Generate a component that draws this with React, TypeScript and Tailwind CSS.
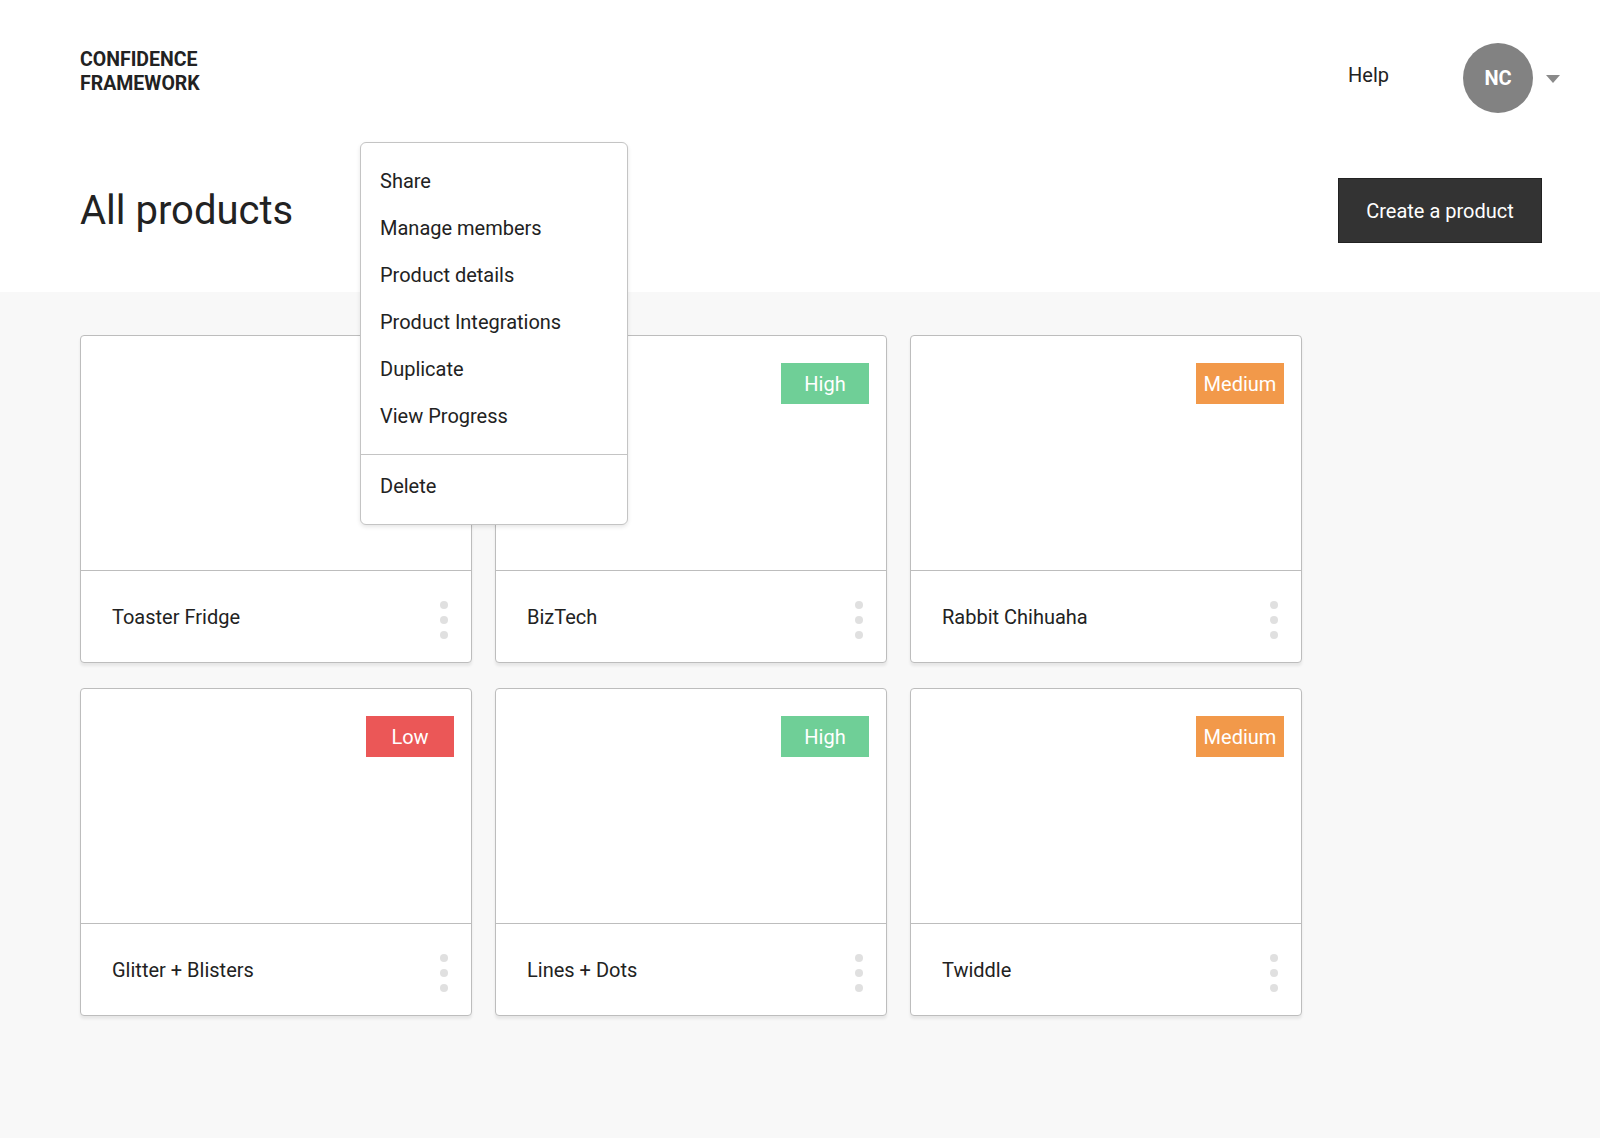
import React from 'react'

interface Product {
  name: string
  level?: 'High' | 'Medium' | 'Low'
}

const products: Product[] = [
  { name: 'Toaster Fridge' },
  { name: 'BizTech', level: 'High' },
  { name: 'Rabbit Chihuaha', level: 'Medium' },
  { name: 'Glitter + Blisters', level: 'Low' },
  { name: 'Lines + Dots', level: 'High' },
  { name: 'Twiddle', level: 'Medium' },
]

const badgeColor: Record<string, string> = {
  High: 'bg-[#6fcf97]',
  Medium: 'bg-[#f2994a]',
  Low: 'bg-[#eb5757]',
}

const menuItems = ['Share', 'Manage members', 'Product details', 'Product Integrations', 'Duplicate', 'View Progress']

function ProductCard({ product }: { product: Product }) {
  return (
    <div className="bg-white border border-[#bdbdbd] rounded-[4px] shadow-[0_3px_3px_rgba(0,0,0,0.07)]">
      <div className="h-[234px] flex justify-end items-start pt-[27px] pr-[17px]">
        {product.level && (
          <span className={`w-[88px] h-[41px] flex items-center justify-center text-white text-[20px] ${badgeColor[product.level]}`}>
            {product.level}
          </span>
        )}
      </div>
      <div className="h-[92px] border-t border-[#bdbdbd] flex items-center justify-between pl-[31px] pr-[23px]">
        <span className="text-[20px] text-[#222]">{product.name}</span>
        <div className="flex flex-col gap-[7px] pt-[6px]">
          <span className="w-[8px] h-[8px] rounded-full bg-[#e0e0e0]" />
          <span className="w-[8px] h-[8px] rounded-full bg-[#e0e0e0]" />
          <span className="w-[8px] h-[8px] rounded-full bg-[#e0e0e0]" />
        </div>
      </div>
    </div>
  )
}

export default function App() {
  return (
    <div className="relative min-h-[1138px] bg-[#f8f8f8] font-['Roboto',sans-serif] text-[#222]">
      <header className="bg-white h-[292px]">
        <div className="flex justify-between items-start pt-[43px] pl-[80px] pr-[40px]">
          <div className="mt-[5px] text-[19.5px] leading-[24px] font-bold">
            CONFIDENCE
            <br />
            FRAMEWORK
          </div>
          <div className="flex items-center">
            <span className="text-[20px] mr-[74px] -mt-[6px]">Help</span>
            <div className="w-[70px] h-[70px] rounded-full bg-[#828282] flex items-center justify-center text-white text-[20px] font-bold">
              NC
            </div>
            <span className="ml-[13px] mt-[2px] w-0 h-0 border-l-[7px] border-r-[7px] border-t-[8px] border-l-transparent border-r-transparent border-t-[#8a8a8a]" />
          </div>
        </div>
        <div className="flex justify-between items-center mt-[65px] pl-[80px] pr-[58px]">
          <h1 className="text-[40px] leading-[48px] font-normal">All products</h1>
          <button className="w-[204px] h-[65px] bg-[#333] border border-[#222] text-white text-[20px]">
            Create a product
          </button>
        </div>
      </header>

      <main className="grid grid-cols-[392px_392px_392px] gap-x-[23px] gap-y-[25px] pl-[80px] pt-[43px]">
        {products.map(p => (
          <ProductCard key={p.name} product={p} />
        ))}
      </main>

      <div className="absolute left-[360px] top-[142px] w-[268px] bg-white border border-[#c4c4c4] rounded-[6px] shadow-[0_2px_4px_rgba(0,0,0,0.1)]">
        <ul className="pt-[14px] pb-[15px]">
          {menuItems.map(item => (
            <li key={item} className="h-[47px] flex items-center pl-[19px] text-[20px]">
              {item}
            </li>
          ))}
        </ul>
        <div className="border-t border-[#c4c4c4] pt-[7px] pb-[15px]">
          <div className="h-[47px] flex items-center pl-[19px] text-[20px]">Delete</div>
        </div>
      </div>
    </div>
  )
}
